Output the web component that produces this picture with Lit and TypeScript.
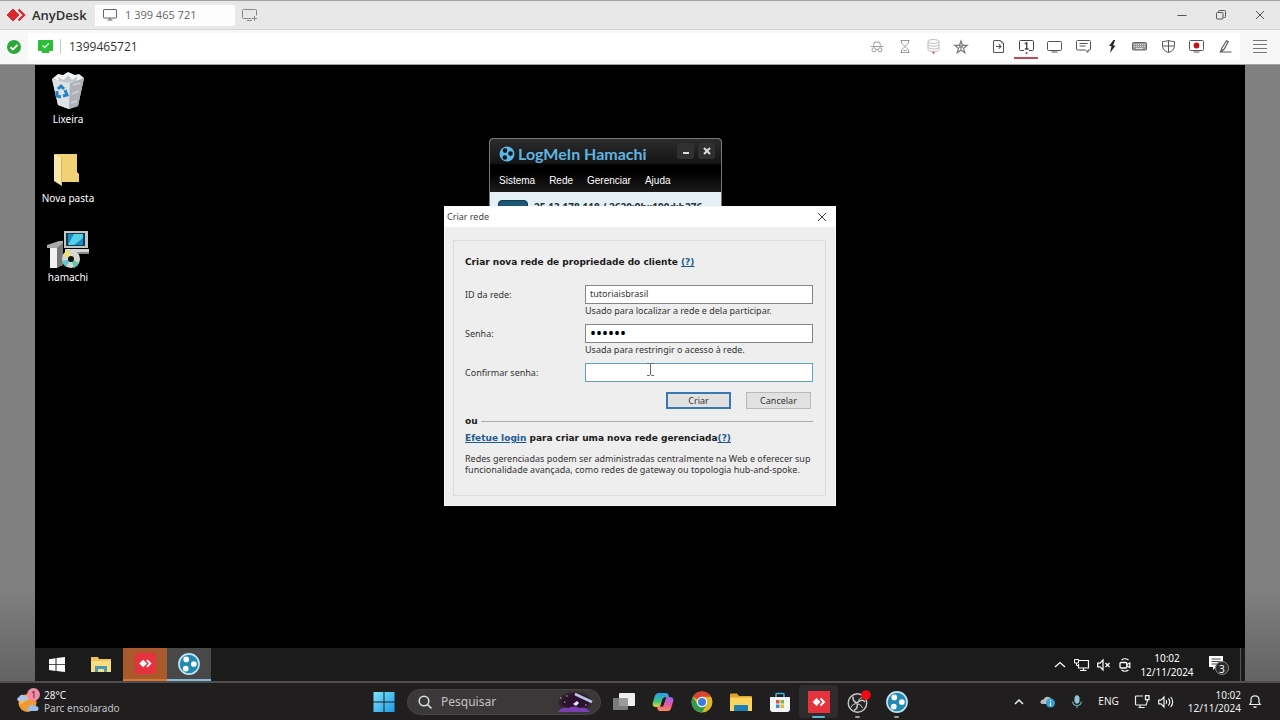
import { LitElement, html, css, svg } from "lit";
import { customElement } from "lit/decorators.js";

const icon = (w: number, h: number, body: unknown, box = `0 0 ${w} ${h}`) =>
  html`<svg class="ic" width=${w} height=${h} viewBox=${box} fill="none" stroke="currentColor" aria-hidden="true">${body}</svg>`;

/* ---------- AnyDesk chrome icons ---------- */
const adLogo = icon(22, 14, svg`<path d="M7 1l6 6-6 6-6-6z" fill="#dc2630" stroke="#dc2630"/><path d="M12.500 1.500L18 7l-5.500 5.500" stroke="#dc2630" stroke-width="2.400"/>`);
const screen = icon(14, 12, svg`<rect x="0.500" y="0.500" width="13" height="8.500" rx="0.500"/><path d="M4.500 11h5M7 9v2"/>`);
const screenPlus = icon(16, 12, svg`<path d="M9.500 9.500h-8a1 1 0 0 1-1-1v-7a1 1 0 0 1 1-1h12a1 1 0 0 1 1 1V6.500M5 11.500h5M12.500 7v5M10 9.500h5"/>`);
const minimize = icon(10, 10, svg`<path d="M0.500 5.500h9"/>`);
const restore = icon(10, 10, svg`<rect x="0.500" y="2.500" width="6.500" height="6.500" rx="1"/><path d="M2.500 2.500v-1a1 1 0 0 1 1-1h5a1 1 0 0 1 1 1v5a1 1 0 0 1-1 1h-1"/>`);
const cross = icon(10, 10, svg`<path d="M1 1l8 8M9 1l-8 8"/>`);
const okCircle = icon(14, 14, svg`<circle cx="7" cy="7" r="7" fill="#2aa937" stroke="none"/><path d="M3.500 7.200l2.500 2.300 4.500-4.600" stroke="#fff" stroke-width="1.900"/>`);
const okScreen = icon(15, 13, svg`<path d="M0.500 0.500h14v10h-14zM4 11.500h7v1h-7z" fill="#2dbd3a" stroke="#2dbd3a" stroke-width="1"/><path d="M4.500 5.500l2.200 2 4-4" stroke="#d8ffd8" stroke-width="1.400"/>`);
const spy = icon(14, 12, svg`<path d="M3.500 4.500l1-3.500h1.500l1 .6 1-.6h1.500l1 3.500M0.500 5.500h13"/><circle cx="4" cy="8.800" r="2"/><circle cx="10" cy="8.800" r="2"/><path d="M6 8.500h2"/>`);
const hourglass = icon(10, 13, svg`<path d="M0.500 0.500h9M0.500 12.500h9M1.500 0.500v2.500L5 6.500 8.500 3V0.500M1.500 12.500V10L5 6.500 8.500 10v2.500M3.500 10.500h3"/>`);
const disks = icon(13, 15, svg`<g stroke="#bbb"><ellipse cx="6.500" cy="2.500" rx="5.500" ry="2"/><path d="M1 2.500v8c0 1.200 2.500 2 5.500 2s5.500-.8 5.500-2v-8M1 5.200c0 1.200 2.500 2 5.500 2s5.500-.8 5.500-2M1 8c0 1.200 2.500 2 5.500 2s5.500-.8 5.500-2"/></g><circle cx="6.500" cy="13.700" r="1" fill="#c33" stroke="none"/>`);
const star = icon(14, 14, svg`<path d="M7 1l1.500 4.300 4.700.1-3.700 2.800 1.300 4.500L7 10.100l-3.800 2.600 1.300-4.500L.8 5.400l4.700-.1z" stroke="#777" stroke-width="1.200"/><path d="M7 4.500v5M5 7h4" stroke="#888" stroke-width="1.300"/>`);
const fileArrow = icon(11, 13, svg`<path d="M0.500 1.500a1 1 0 0 1 1-1h5.500l3.500 3v8a1 1 0 0 1-1 1h-8a1 1 0 0 1-1-1zM3 6.500h5M5.800 4.300l2.200 2.200-2.200 2.200" stroke-width="1.100"/>`);
const screenOne = icon(15, 14, svg`<path d="M5 10.500H1.500a1 1 0 0 1-1-1v-8a1 1 0 0 1 1-1h12a1 1 0 0 1 1 1v8a1 1 0 0 1-1 1H10" /><path d="M5.700 4l2-1.300V9M5.800 9h3.800" stroke-width="1.400"/><circle cx="7.500" cy="13" r="1" fill="#c22" stroke="none"/>`);
const screenPlain = icon(15, 12, svg`<rect x="0.500" y="0.500" width="14" height="9" rx="1"/><path d="M4.500 11h6"/>`);
const chat = icon(15, 13, svg`<path d="M1.500.5h12a1 1 0 0 1 1 1v7.500a1 1 0 0 1-1 1h-1.500v2.500l-2.700-2.500H1.500a1 1 0 0 1-1-1V1.500a1 1 0 0 1 1-1zM3.500 3.500h8M3.500 6h6"/>`);
const bolt = icon(8, 13, svg`<path d="M5.500 0L1 6h2.500L2 13l5.500-7.500H5L7.200 0z" fill="#222" stroke="none"/>`);
const keyboard = icon(15, 9, svg`<rect x="0.500" y="0.500" width="14" height="7.500" rx="1" fill="#999" stroke="#666"/><path d="M2 2.500h11M2 4.500h11" stroke="#ddd" stroke-dasharray="1 1"/><path d="M4 6.500h7" stroke="#ddd"/>`);
const shield = icon(13, 13, svg`<path d="M.5 1.500c2.500 0 4-.3 6-1 2 .7 3.500 1 6 1v4c0 3.500-2.500 6-6 7-3.500-1-6-3.500-6-7zM6.500.5v12M.5 6h12"/>`);
const record = icon(15, 13, svg`<rect x="0.500" y="0.500" width="14" height="10" rx="1"/><path d="M4.500 12h6"/><circle cx="7.500" cy="5.500" r="2.900" fill="#c4121c" stroke="none"/>`);
const pen = icon(13, 13, svg`<path d="M1.500 12L3 8 7.500 .8l1.800 1L5 9.300 1.500 12h11" stroke-width="1.100"/>`);
const burger = icon(14, 14, svg`<path d="M0 0.500h14M0 4.500h14M0 8.500h14M0 12.500h14"/>`);

/* ---------- desktop icons ---------- */
const bin = icon(36, 38, svg`<g stroke="none"><path d="M2 7l8 3 24-4-6 28-9 3-11-4z" fill="#c9ccd0"/><path d="M2 7l6 26 11 4 1-27z" fill="#dfe2e5"/><path d="M20 10l14-4-6 28-9 3z" fill="#aeb2b7"/><path d="M2 7l6-5 5 1 5-3 7 3 4-1 5 4-14 5z" fill="#f3f4f5"/><path d="M8 5l6 3 4-5 4 5 6-4-2 5-8 2-9-2z" fill="#c4c8cc"/><path d="M23 13l7-2M22 22l7-3M21 31l6-2" stroke="#c9ccd0" stroke-width="2"/></g><path d="M8 17l3-3 3 3M15 18l2 5-4 1M11 25l-4-1 0-5" stroke="#2384c6" stroke-width="3"/>`);
const folder = icon(30, 34, svg`<g stroke="none"><path d="M2 1h22v18l2 2v8H9z" fill="#f0d174"/><path d="M1 1l8 4v28l-8-5z" fill="#f9e8ab"/><path d="M9 5v28l-1-.5V4.500z" fill="#d9b95b"/></g>`);
const setup = icon(42, 38, svg`<g stroke="none"><path d="M17 1h24v17H17z" fill="#c3c6c3"/><path d="M19 3h19v13H19z" fill="#17384e"/><path d="M21 4h15v11H21z" fill="#188cc4"/><path d="M27 4h9v4l-9 7h-6z" fill="#53cfe6"/><path d="M18 19h24v5H18z" fill="#d7d7d2"/><path d="M18 22h24v2H18z" fill="#888"/><path d="M0 15l12-4h4v24l-9 3H3V18H0z" fill="#aaa"/><path d="M3 18h7v20H3z" fill="#f2f2f2"/><path d="M10 18l6-5v22l-6 3z" fill="#777"/><circle cx="24" cy="29" r="9" fill="#d4d6cf"/><path d="M24 29l-8-4a9 9 0 0 1 6-5z" fill="#f0e270"/><path d="M24 29l8 4a9 9 0 0 1-5 5z" fill="#5fc5b0"/><path d="M24 29l-5 8a9 9 0 0 1-4-6z" fill="#63c6d0"/><circle cx="24" cy="29" r="3" fill="#111"/></g>`);

/* ---------- shared glyphs ---------- */
const hamachi = (s: number) => icon(s, s, svg`<circle cx="12" cy="12" r="11" fill="#2389b0" stroke="#bfe6f4" stroke-width="1.800"/><g fill="#fff" stroke="none"><circle cx="9" cy="7" r="3.100"/><circle cx="17.300" cy="12" r="3.100"/><circle cx="8.500" cy="17" r="3.100"/></g>`, "0 0 24 24");
const hamachiMark = icon(16, 16, svg`<circle cx="8" cy="8" r="7.500" fill="#5cb8e4" stroke="none"/><g fill="#0a141a" stroke="none"><circle cx="6" cy="4.600" r="2.300"/><circle cx="11.500" cy="7.600" r="2.300"/><circle cx="5.800" cy="11.500" r="2.300"/></g>`);
const anydeskTile = (s: number, r: number) => icon(s, s, svg`<rect width="22" height="22" rx=${r} fill="#e5323e" stroke="none"/><path d="M8.500 7l4 4-4 4-4-4z" fill="#fff" stroke="none"/><path d="M12.500 7.500L16 11l-3.500 3.500" stroke="#fff" stroke-width="2"/>`, "0 0 22 22");
const explorer = (w: number, h: number) => icon(w, h, svg`<g stroke="none"><path d="M0 1.500Q0 .5 1 .5h6l2 2.500h12q1 0 1 1V18H0z" fill="#dfa52b"/><path d="M0 4.500h22V18H0z" fill="#fbd35d"/><path d="M4 18v-5q0-1 1-1h12q1 0 1 1v5z" fill="#1d7fb8"/></g>`, "0 0 22 18");
const explorerOld = icon(20, 16, svg`<g stroke="none"><path d="M0 1h7l1 2h12v13H0z" fill="#efc257"/><path d="M0 5h20v11H0z" fill="#fbdc81"/><path d="M4 16V10h12v6h-3v-3H7v3z" fill="#4a9db5"/></g>`);
const winOld = icon(16, 15, svg`<path d="M0 2.200l6.500-.9v5.900H0zM7.500 1.100L16 0v7.200H7.500zM0 8h6.500v5.900L0 13zM7.500 8H16v7l-8.500-1.100z" fill="#fff" stroke="none"/>`);
const win = icon(22, 20, svg`<defs><linearGradient id="w" x1="0" y1="0" x2="1" y2="1"><stop offset="0" stop-color="#7fe3fb"/><stop offset="1" stop-color="#1a9ae6"/></linearGradient></defs><path d="M0.500 0h10v9.500h-10zM11.500 0h10v9.500h-10zM0.500 10.500h10V20h-10zM11.500 10.500h10V20h-10z" fill="url(#w)" stroke="none"/>`);
const search = icon(14, 14, svg`<circle cx="6" cy="6" r="4.800" stroke-width="1.500"/><path d="M9.500 9.500l4 4" stroke-width="1.700"/>`);
const space = icon(38, 22, svg`<defs><radialGradient id="sp"><stop offset="0" stop-color="#2d0d3c"/><stop offset="0.700" stop-color="#2b1526"/><stop offset="1" stop-color="#3a3838"/></radialGradient></defs><ellipse cx="19" cy="11" rx="18" ry="11" fill="url(#sp)" stroke="none"/><path d="M2 21q4-6 10-4 6-3 12 0 6-2 10 4z" fill="#7a3fb0" stroke="none"/><path d="M19 3l17 8" stroke="#b7c6ea" stroke-width="2.500"/><path d="M17 13l4-3 2 2-3 3z" fill="#e5e9fb" stroke="none"/><path d="M4 7h1.500M10 5h1.500M8 11h1.500M29 14h1.500" stroke="#cbbbe8"/>`);
const taskView = icon(22, 18, svg`<rect x="6" y="0" width="16" height="13" rx="1" fill="#eee" stroke="none"/><rect x="0" y="5" width="15" height="12" rx="1" fill="#8d8d8d" fill-opacity="0.850" stroke="none"/>`);
const copilot = icon(22, 20, svg`<defs><linearGradient id="c1" x1="0" y1="0" x2="0" y2="1"><stop offset="0" stop-color="#2a9bf0"/><stop offset="0.600" stop-color="#3bc37c"/><stop offset="1" stop-color="#f3d33c"/></linearGradient><linearGradient id="c2" x1="0" y1="0" x2="0" y2="1"><stop offset="0" stop-color="#9b62f0"/><stop offset="0.600" stop-color="#ec5a9b"/><stop offset="1" stop-color="#f7954a"/></linearGradient></defs><g stroke="none"><path d="M6 1h8q2 0 2.500 2l.7 2.500H13q-2 0-2.700 2L8 15H4q-4 0-3.300-4L3 3.500Q4 1 6 1z" fill="url(#c1)"/><path d="M16 19H8q-2 0-2.500-2l-.7-2.500H9q2 0 2.700-2L14 5h4q4 0 3.300 4L19 16.500Q18 19 16 19z" fill="url(#c2)"/><path d="M9 14.500l3-9h2l-3 9z" fill="#1e1c1d"/></g>`);
const chrome = icon(22, 22, svg`<g stroke="none"><circle cx="11" cy="11" r="10.500" fill="#dfb728"/><path d="M11 11L1.900 5.800A10.500 10.500 0 0 1 20.100 5.800H11z" fill="#d9432f"/><path d="M1.900 5.800A10.500 10.500 0 0 0 11 21.500L15.500 13.600 11 11 6.500 13.600z" fill="#31994d"/><circle cx="11" cy="11" r="5.200" fill="#fff"/><circle cx="11" cy="11" r="4" fill="#3d7de0"/></g>`);
const store = icon(22, 20, svg`<path d="M7 5V2.500q0-1 1-1h6q1 0 1 1V5" stroke="#42b5dc" stroke-width="1.500"/><path d="M1 5h20v12q0 3-3 3H4q-3 0-3-3z" fill="#f2f4f6" stroke="none"/><g stroke="none"><path d="M7 8h3.500v3.500H7z" fill="#e2523a"/><path d="M11.500 8H15v3.500h-3.500z" fill="#7cb542"/><path d="M7 12.500h3.500V16H7z" fill="#2f8fd8"/><path d="M11.500 12.500H15V16h-3.500z" fill="#eeb32a"/></g>`);
const obs = icon(24, 22, svg`<circle cx="11.500" cy="12" r="9.300" fill="#272527" stroke="#c8c8c8" stroke-width="1.400"/><g stroke="#c8c8c8" stroke-width="1.500"><path d="M7 5.500q-.5 5 4 6.500M19 11q-3-4-8 1M11 12q1.500 5-3 7.500"/><path d="M10 12.500q-4 .5-5 4M12 11q1-4 4-4.500M12 13q3 0 4.500 4" stroke-width="1"/></g><circle cx="20" cy="4" r="4.800" fill="#f00b12" stroke="none"/>`);
const weather = icon(23, 22, svg`<g stroke="none"><circle cx="11.500" cy="12" r="9" fill="#f0992f"/><path d="M3 14a9 9 0 0 1 14-8z" fill="#f8bb50"/><path d="M2 10q-2-3 1-4 2-4 6-1 3 0 2.500 3 0 2-2 2z" fill="#a9c4f1"/><path d="M12 20q-2-3 1-4 2-4 6-1 4 0 3.500 3 0 2-2 2z" fill="#9bbcf1"/></g>`);
const chevron = icon(12, 7, svg`<path d="M1 6l5-4.500L11 6" stroke-width="1.200"/>`);
const chevronSmall = icon(10, 6, svg`<path d="M1 5l4-4 4 4" stroke-width="1.500"/>`);
const netOld = icon(15, 12, svg`<path d="M5 1.500h9.500v7.500h-10V5M6 11.500h6.500M9.500 9v2.500" stroke-width="1.200"/><path d="M.5.500h4v3.500h-4zM2.500 4v2.500h2"/>`);
const muted = icon(14, 12, svg`<path d="M.7 4.200H3L6 1v10L3 7.800H.7z" stroke-width="1.200"/><path d="M8.500 4l4 4M12.500 4l-4 4" stroke-width="1.200"/>`);
const meet = icon(12, 14, svg`<path d="M2.500 2Q6-.5 9.500 2M2.500 12q3.500 2.500 7 0" stroke-width="1.200"/><rect x="1" y="4.500" width="6.800" height="5.500" rx="1" stroke-width="1.300"/><path d="M8 6.500l2.800-1.500v4.500L8 8" stroke-width="1.200"/>`);
const note = icon(21, 20, svg`<path d="M1 1h14v11H8l-3 3v-3H1z" fill="#fff" stroke="none"/><path d="M3.500 4h9M3.500 6.500h9M3.500 9h6" stroke="#444"/><circle cx="14" cy="13" r="6.500" fill="#2a2a2a" stroke="#888"/>`);
const cloud = icon(16, 14, svg`<path d="M3 9Q0 9 .5 6.500 1 4.500 3.500 4.500 5 1 8.500 2q3 .5 3 3.500 0 3.500-3 3.500z" fill="#bdbdbd" stroke="none"/><circle cx="10.500" cy="8" r="4.500" fill="#2f9fd8" stroke="none"/><path d="M10.500 7.500V11M10.500 5v1.200" stroke="#fff" stroke-width="1.300"/>`);
const mic = icon(10, 14, svg`<rect x="3" y="0.700" width="4" height="7.500" rx="2" fill="#8fc7d3" stroke="#8fc7d3"/><path d="M.7 6.500q.3 4 4.300 4t4.300-4M5 10.500V13" stroke="#74a9b5" stroke-width="1.200"/>`);
const net = icon(15, 13, svg`<path d="M8 1H1.500a1 1 0 0 0-1 1v7a1 1 0 0 0 1 1h9a1 1 0 0 0 1-1V7.500M3.500 12.500h6M5 10v2" stroke-width="1.200"/><path d="M10.500.7h3.500v4h-3.500zM12.300 4.700v2.500" stroke-width="1.300"/>`);
const speaker = icon(16, 12, svg`<path d="M.7 4.200H3L6 1v10L3 7.800H.7zM8 4q1.500 2 0 4M10.300 2.500q3 3.500 0 7M12.700 1q4 5 0 10" stroke-width="1.200"/>`);
const bell = icon(12, 13, svg`<path d="M.8 9.500L2 7.500V4.800q0-4 4-4t4 4v2.700l1.200 2zM4.500 11.500q1.500 1.500 3 0" stroke-width="1.200"/>`);
const ibeam = icon(7, 13, svg`<path d="M0 .5h2.500l1 1 1-1H7M0 12.500h2.500l1-1 1 1H7M3.500 1.500v10" stroke="#666"/>`);

const base = css`
  :host, * { box-sizing: border-box; }
  button { font: inherit; color: inherit; background: none; border: 0; padding: 0; margin: 0; display: flex; align-items: center; justify-content: center; }
  .ic { display: block; flex: none; overflow: visible; }
`;

@customElement("session-header")
class SessionHeader extends LitElement {
  static styles = [base, css`
    :host { display: block; flex: none; font-family: "Open Sans", "Noto Sans", sans-serif; color: #3a3a3a; background: #f7f7f7; }
    .tabs { display: flex; align-items: center; height: 30px; padding: 0 15px 0 6px; background: #e8e8e8; border-top: 1px solid #a3a0a2; border-bottom: 1px solid #d4d4d4; }
    .brand { display: flex; align-items: center; gap: 4px; width: 89px; font-size: 13px; font-weight: 600; color: #2e2e2e; }
    .tab { width: 140px; height: 21px; gap: 8px; padding: 0 8px; justify-content: flex-start; background: #fdfdfd; font-size: 11px; line-height: 20px; color: #666; }
    .new { margin-left: 7px; color: #888; }
    .win { display: flex; gap: 29px; margin-left: auto; color: #555; }
    .bar { display: flex; align-items: center; height: 35px; padding: 0 13px 1px 7px; border-bottom: 1px solid #a3a3a3; }
    .field { display: flex; align-items: center; flex: 1; height: 27px; margin: 0 13px 0 7px; padding: 0 5px 0 10px; background: #fff; }
    .addr { flex: 1; min-width: 0; height: 15px; margin-left: 7px; padding: 0 0 0 8px; border: 0; border-left: 1px solid #ccc; outline: 0; background: none; font: 12px "Open Sans", "Noto Sans", sans-serif; color: #333; }
    .group { display: flex; justify-content: space-between; height: 100%; }
    .group button { width: 20px; }
    .dim { width: 104px; margin-right: 17px; color: #999; }
    .main { width: 247px; color: #555; }
    .main .on { position: relative; color: #444; }
    .on::after { content: ""; position: absolute; left: -2px; right: -2px; bottom: 1px; height: 2px; background: #c04a52; }
    .menu { color: #777; }
  `];
  render() {
    const dim = [["Privacidade", spy], ["Espera", hourglass], ["Armazenamento", disks], ["Favorito", star]];
    const main = [["Arquivos", fileArrow], ["Monitor 1", screenOne], ["Tela", screenPlain], ["Chat", chat], ["Ações", bolt], ["Teclado", keyboard], ["Permissões", shield], ["Gravar", record], ["Quadro", pen]];
    return html`
      <div class="tabs">
        <div class="brand">${adLogo}<span>AnyDesk</span></div>
        <button class="tab">${screen}<span>1 399 465 721</span></button>
        <button class="new" aria-label="Nova sessão">${screenPlus}</button>
        <div class="win">
          <button aria-label="Minimizar">${minimize}</button>
          <button aria-label="Restaurar">${restore}</button>
          <button aria-label="Fechar">${cross}</button>
        </div>
      </div>
      <div class="bar">
        ${okCircle}
        <div class="field">
          ${okScreen}
          <input class="addr" aria-label="Endereço remoto" value="1399465721" />
          <div class="group dim">${dim.map(([n, i]) => html`<button aria-label=${n}>${i}</button>`)}</div>
          <div class="group main">${main.map(([n, i], k) => html`<button class=${k === 1 ? "on" : ""} aria-label=${n}>${i}</button>`)}</div>
        </div>
        <button class="menu" aria-label="Menu">${burger}</button>
      </div>`;
  }
}

@customElement("hamachi-window")
class HamachiWindow extends LitElement {
  static styles = [base, css`
    :host { display: block; border: 1px solid #777; border-radius: 4px 4px 0 0; overflow: hidden; background: #e4eff6; font-family: "Liberation Sans", Arial, sans-serif; }
    .head { height: 53px; padding: 4px 6px 0 9px; background: linear-gradient(#2c2c2c, #151515 24px, #000 26px, #000 34px, #1c1c1c); color: #fff; }
    .title { display: flex; align-items: flex-start; height: 29px; }
    .name { display: flex; align-items: center; gap: 3px; flex: 1; height: 22px; font: 700 16px/22px Lato, "Noto Sans", sans-serif; color: #5fb4e0; }
    .ctl { width: 17px; height: 16px; margin-left: 4px; border-radius: 3px; background: #303030; color: #ddd; }
    .menu { display: flex; gap: 14px; font-size: 10px; line-height: 18px; }
    .body { display: flex; gap: 6px; padding: 8px 8px 0; font: 700 10px/14px "Noto Sans", sans-serif; color: #26323a; white-space: nowrap; }
    .power { width: 30px; height: 24px; border-radius: 4px; background: #1d5674; border: 1px solid #123b52; }
  `];
  render() {
    return html`
      <div class="head">
        <div class="title">
          <div class="name">${hamachiMark}<span>LogMeIn Hamachi</span></div>
          <button class="ctl" aria-label="Minimizar">${icon(8, 8, svg`<path d="M1 6h6" stroke-width="2"/>`)}</button>
          <button class="ctl" aria-label="Fechar">${icon(8, 8, svg`<path d="M1 1l6 6M7 1L1 7" stroke-width="2"/>`)}</button>
        </div>
        <div class="menu">${["Sistema", "Rede", "Gerenciar", "Ajuda"].map((m) => html`<button>${m}</button>`)}</div>
      </div>
      <div class="body"><button class="power" aria-label="Ligar"></button><span>25.13.178.118 / 2620:9b::190d:b276</span></div>`;
  }
}

@customElement("create-network-dialog")
class CreateNetworkDialog extends LitElement {
  static styles = [base, css`
    :host { display: block; background: #eee; border: 1px solid #f8f8f8; font: 9px/14px "Noto Sans", sans-serif; color: #333; }
    .title { display: flex; align-items: center; justify-content: space-between; height: 20px; padding: 0 8px 0 2px; background: #fff; color: #444; }
    .box { margin: 13px 9px 9px 8px; padding: 14px 12px 20px 11px; border: 1px solid #dcdcdc; }
    h1, .login { margin: 0; font: 700 9px/14px "DejaVu Sans", Verdana, sans-serif; color: #1a1a1a; white-space: nowrap; }
    h1 { margin-bottom: 16px; }
    a { color: #1c5a93; }
    .fields { display: grid; grid-template-columns: 120px 1fr; }
    label { line-height: 19px; }
    .text { width: 100%; height: 19px; padding: 0 4px 2px; border: 1px solid #858585; border-radius: 0; outline: 0; background: #fff; font: inherit; color: #333; }
    .text.focus { border-color: #5ea3b8; }
    .dots { font-size: 16px; color: #000; }
    .hint { grid-column: 2; height: 20px; line-height: 14px; white-space: nowrap; }
    .actions { display: flex; justify-content: flex-end; gap: 15px; margin: 10px 2px 0 0; }
    .actions button { width: 65px; height: 17px; border: 1px solid #b9b9b9; background: #e1e1e1; }
    .actions .default { border: 2px solid #3a78b4; }
    .or { display: flex; align-items: center; gap: 3px; margin: 6px 0 4px; font: 700 9px/12px "DejaVu Sans", Verdana, sans-serif; color: #1a1a1a; }
    .rule { flex: 1; height: 1px; background: #aaa; }
    p { margin: 8px 0 0; line-height: 11px; white-space: nowrap; }
  `];
  render() {
    return html`
      <div class="title"><span>Criar rede</span><button aria-label="Fechar">${cross}</button></div>
      <div class="box">
        <h1>Criar nova rede de propriedade do cliente <a href="#ajuda">(?)</a></h1>
        <div class="fields">
          <label for="id">ID da rede:</label>
          <input id="id" class="text" value="tutoriaisbrasil" />
          <div class="hint">Usado para localizar a rede e dela participar.</div>
          <label for="pw">Senha:</label>
          <input id="pw" class="text dots" type="password" value="123456" />
          <div class="hint">Usada para restringir o acesso à rede.</div>
          <label for="pw2">Confirmar senha:</label>
          <input id="pw2" class="text focus" type="password" />
        </div>
        <div class="actions"><button class="default">Criar</button><button>Cancelar</button></div>
        <div class="or"><span>ou</span><span class="rule"></span></div>
        <div class="login"><a href="#login">Efetue login</a> para criar uma nova rede gerenciada<a href="#ajuda">(?)</a></div>
        <p>Redes gerenciadas podem ser administradas centralmente na Web e oferecer sup<br />funcionalidade avançada, como redes de gateway ou topologia hub-and-spoke.</p>
      </div>`;
  }
}

@customElement("remote-desktop")
class RemoteDesktop extends LitElement {
  static styles = [base, css`
    :host { display: flex; flex: 1; min-height: 0; padding: 0 35px; background: linear-gradient(#808080 85%, #636363); font-family: "Noto Sans", sans-serif; color: #fff; }
    .screen { position: relative; display: flex; flex-direction: column; flex: 1; background: #000; overflow: hidden; }
    .icons { display: flex; flex-direction: column; gap: 23px; flex: 1; align-items: flex-start; padding-top: 5px; }
    .icons button { flex-direction: column; width: 66px; height: 56px; font-size: 10px; line-height: 14px; }
    .pic { display: flex; align-items: center; height: 42px; }
    .hama { position: absolute; left: 454px; top: 73px; width: 233px; height: 90px; }
    .dialog { position: absolute; left: 409px; top: 141px; width: 392px; }
    .cursor { position: absolute; left: 612px; top: 298px; }
    .task { display: flex; height: 33px; background: #1b1b1b; font-size: 10px; line-height: 14px; }
    .task > button { width: 44px; padding-bottom: 1px; }
    .task .any { background: #a85a2c; border-bottom: 2px solid #d9762d; padding: 0; }
    .task .ham { background: #484848; border-bottom: 2px solid #86b9dc; padding: 0; }
    .tray { display: flex; align-items: center; gap: 8px; margin-left: auto; padding-right: 9px; border-right: 1px solid #555; margin-right: 4px; }
    .clock { width: 56px; text-align: center; margin-right: 2px; }
    .note { position: relative; width: 26px; }
    .note span { position: absolute; left: 14px; top: 7px; font-size: 10px; }
  `];
  render() {
    const items = [["Lixeira", bin], ["Nova pasta", folder], ["hamachi", setup]];
    return html`
      <div class="screen">
        <div class="icons">${items.map(([n, i]) => html`<button><span class="pic">${i}</span><span>${n}</span></button>`)}</div>
        <hamachi-window class="hama"></hamachi-window>
        <create-network-dialog class="dialog"></create-network-dialog>
        <div class="cursor">${ibeam}</div>
        <div class="task">
          <button aria-label="Iniciar">${winOld}</button>
          <button aria-label="Explorador">${explorerOld}</button>
          <button class="any" aria-label="AnyDesk">${anydeskTile(21, 3)}</button>
          <button class="ham" aria-label="Hamachi">${hamachi(22)}</button>
          <div class="tray">
            <button aria-label="Mostrar ícones ocultos">${chevron}</button>
            <button aria-label="Rede">${netOld}</button>
            <button aria-label="Volume">${muted}</button>
            <button aria-label="Reunião">${meet}</button>
            <div class="clock">10:02<br />12/11/2024</div>
            <button class="note" aria-label="Notificações">${note}<span>3</span></button>
          </div>
        </div>
      </div>`;
  }
}

@customElement("host-taskbar")
class HostTaskbar extends LitElement {
  static styles = [base, css`
    :host { display: grid; grid-template-columns: 1fr auto 1fr; align-items: center; flex: none; height: 39px; background: #201e1f; border-top: 2px solid #504e4f; font: 10px/13px "Noto Sans", sans-serif; color: #f0f0f0; }
    .weather { position: relative; justify-self: start; gap: 5px; padding-left: 16px; text-align: left; }
    .weather small { display: block; font-size: 10px; color: #c4c4c4; }
    .badge { position: absolute; left: 27px; top: -1px; width: 13px; height: 13px; border-radius: 50%; background: #f08ca4; color: #3a2028; text-align: center; font-size: 9px; }
    .apps { display: flex; align-items: center; padding-left: 8px; }
    .start { width: 24px; margin-right: 11px; }
    .search { display: flex; align-items: center; gap: 9px; width: 194px; height: 26px; margin-right: 3px; padding: 0 6px 0 10px; border-radius: 13px; border: 1px solid #454344; background: #3a3838; color: #ddd; }
    .search input { flex: 1; min-width: 0; padding: 0; border: 0; outline: 0; background: none; font: 12px "Noto Sans", sans-serif; color: #ddd; }
    .search input::placeholder { color: #c4c4c4; opacity: 1; }
    .app { position: relative; width: 39px; height: 33px; }
    .sel { border-radius: 4px; background: #2e2c2d; }
    .run::after { content: ""; position: absolute; left: 17px; bottom: 0; width: 5px; height: 2px; border-radius: 1px; background: #9a9a9a; }
    .sel::after { left: 13px; width: 13px; background: #5cb8d6; }
    .tray { display: flex; align-items: center; justify-content: flex-end; padding-right: 19px; }
    .tray button { margin-left: 8px; }
    .tray .wide { margin-left: 16px; }
    .tray .clock { margin: 0 8px 0 14px; text-align: right; }
  `];
  render() {
    const apps = [
      ["Visão de tarefas", taskView, ""], ["Copilot", copilot, ""], ["Chrome", chrome, ""], ["Explorador", explorer(22, 18), ""],
      ["Loja", store, ""], ["AnyDesk", anydeskTile(22, 0), "run sel"], ["OBS", obs, "run"], ["Hamachi", hamachi(22), "run"],
    ];
    return html`
      <button class="weather">${weather}<span class="badge">1</span><span>28°C<small>Parc ensolarado</small></span></button>
      <div class="apps">
        <button class="start" aria-label="Iniciar">${win}</button>
        <label class="search">${search}<input placeholder="Pesquisar" aria-label="Pesquisar" />${space}</label>
        ${apps.map(([n, i, c]) => html`<button class="app ${c}" aria-label=${n}>${i}</button>`)}
      </div>
      <div class="tray">
        <button aria-label="Ícones ocultos">${chevronSmall}</button>
        <button class="wide" aria-label="OneDrive">${cloud}</button>
        <button class="wide" aria-label="Microfone">${mic}</button>
        <button class="wide">ENG</button>
        <button class="wide" aria-label="Rede">${net}</button>
        <button aria-label="Som">${speaker}</button>
        <button class="clock">10:02<br />12/11/2024</button>
        ${bell}
      </div>`;
  }
}

@customElement("app-root")
class AppRoot extends LitElement {
  static styles = css`:host { display: flex; flex-direction: column; height: 100vh; overflow: hidden; background: #201e1f; }`;
  render() {
    return html`<session-header></session-header><remote-desktop></remote-desktop><host-taskbar></host-taskbar>`;
  }
}
